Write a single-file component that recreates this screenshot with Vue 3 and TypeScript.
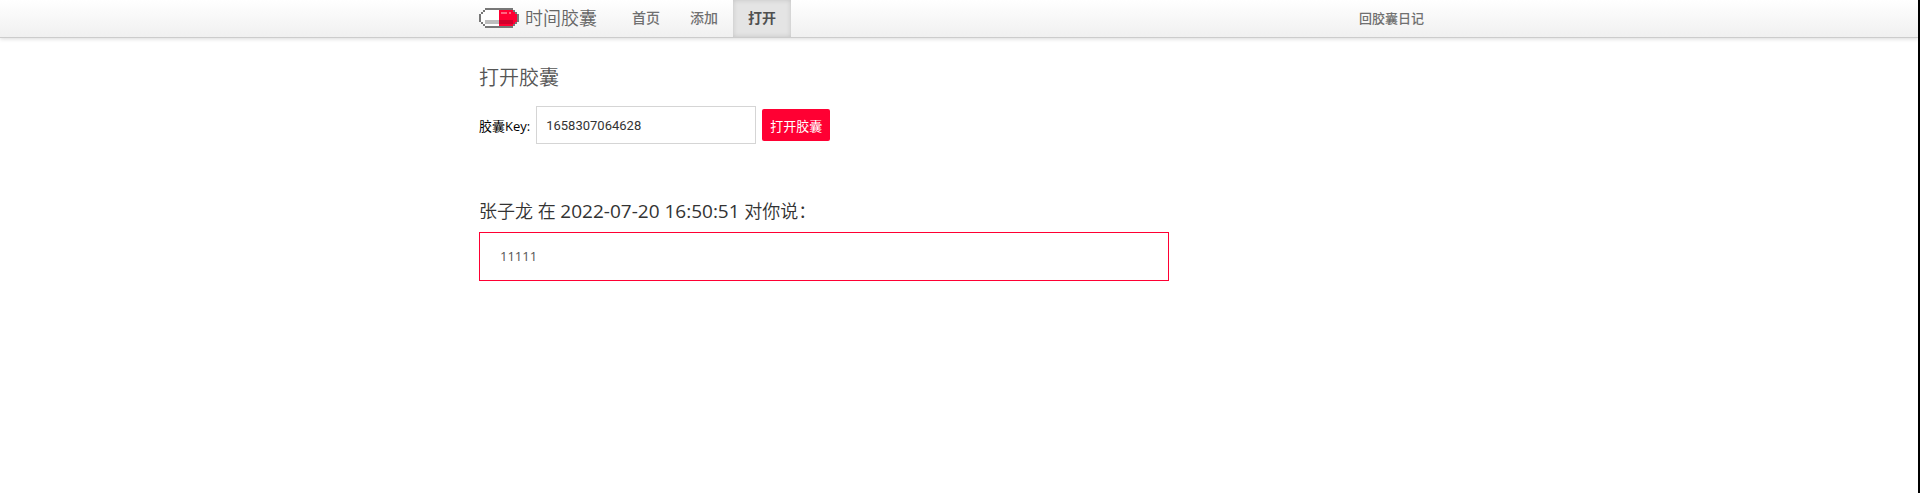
<script setup lang="ts">
import { ref } from 'vue'

interface NavItem {
  label: string
  active?: boolean
}

const navItems: NavItem[] = [
  { label: '首页' },
  { label: '添加' },
  { label: '打开', active: true },
]

const capsuleKey = ref('1658307064628')
const author = '张子龙'
const openedAt = '2022-07-20 16:50:51'
const message = '11111'
</script>

<template>
  <div class="page">
    <header class="navbar">
      <div class="container nav-inner">
        <a class="brand" href="#">
          <svg class="logo" width="40" height="20" viewBox="0 0 40 20" shape-rendering="crispEdges" aria-hidden="true">
            <path fill="#fff" d="M6 2h14v16H6v-2H4v-2H2V6h2V4h2z" />
            <path fill="#ff0033" d="M20 2h14v2h2v2h2v8h-2v2h-2v2H20z" />
            <path fill="#bdbdbd" d="M6 12h14v4H6z" />
            <path fill="#d1002c" d="M20 12h14v4H20z" />
            <path fill="#ff6680" d="M22 4h6v2h-6zM30 4h2v2h-2z" />
            <path fill="#777" d="M6 0h28v2H6zM4 2h2v2H4zM2 4h2v2H2zM0 6h2v8H0zM2 14h2v2H2zM4 16h2v2H4zM6 18h28v2H6zM34 2h2v2h-2zM36 4h2v2h-2zM38 6h2v8h-2zM36 14h2v2h-2zM34 16h2v2h-2z" />
          </svg>
          <span>时间胶囊</span>
        </a>
        <nav class="menu">
          <a v-for="item in navItems" :key="item.label" href="#" :class="{ active: item.active }">{{ item.label }}</a>
        </nav>
        <a class="back" href="#">回胶囊日记</a>
      </div>
    </header>

    <main class="container content">
      <h1>打开胶囊</h1>
      <form class="key-form" @submit.prevent>
        <label for="capsule-key">胶囊Key:</label>
        <input id="capsule-key" v-model="capsuleKey" type="text" />
        <button type="submit">打开胶囊</button>
      </form>
      <section class="result">
        <h2>{{ author }} 在 <time>{{ openedAt }}</time> 对你说：</h2>
        <p class="message">{{ message }}</p>
      </section>
    </main>
  </div>
</template>

<style>
body {
  margin: 0;
  background: #fff;
}
</style>

<style scoped>
.page {
  box-sizing: border-box;
  min-height: 100vh;
  border-right: 2px solid #000;
  font-family: "Open Sans", "Noto Sans CJK SC", sans-serif;
  font-size: 13px;
  color: #000;
}
.container {
  box-sizing: border-box;
  width: 100%;
  max-width: 960px;
  margin: 0 auto;
}
.navbar {
  background: linear-gradient(#fff, #f0f0f0);
  border-bottom: 1px solid #ccc;
  box-shadow: 0 1px 4px rgba(0, 0, 0, 0.15);
}
.nav-inner {
  display: flex;
  height: 37px;
  line-height: 36px;
}
.nav-inner a {
  color: #707070;
  text-decoration: none;
}
.nav-inner .brand {
  display: flex;
  align-items: center;
  height: 36px;
  gap: 6px;
  margin-right: 20px;
  font-size: 18px;
  font-weight: 350;
  color: #666;
}
.menu {
  display: flex;
  font-size: 14px;
  font-weight: 500;
}
.menu a {
  padding: 0 15px;
}
.nav-inner .active {
  background: #e4e4e4;
  box-shadow: inset 0 0 5px rgba(0, 0, 0, 0.15);
  color: #505050;
  font-weight: 700;
}
.back {
  margin-left: auto;
  padding: 0 15px;
  font-weight: 500;
}
h1 {
  margin: 25px 0 13px;
  font-size: 20px;
  line-height: 30px;
  font-weight: 350;
  color: #555;
}
.key-form {
  display: flex;
  align-items: center;
}
.key-form input {
  box-sizing: border-box;
  width: 220px;
  height: 38px;
  margin: 0 6px;
  padding: 0 9px;
  border: 1px solid #d5d5d5;
  background: #fff;
  font-family: Roboto, "Liberation Sans", sans-serif;
  font-size: 13px;
  color: #333;
}
.key-form button {
  height: 32px;
  padding: 0 8px;
  border: 0;
  border-radius: 2px;
  background: #ff0033;
  font: inherit;
  color: #fff;
}
h2 {
  margin: 54px 0 7px;
  font-size: 18px;
  line-height: 27px;
  font-weight: 350;
  color: #333;
}
time {
  font-size: 19px;
  font-weight: 400;
}
.message {
  max-width: 690px;
  box-sizing: border-box;
  margin: 0;
  padding: 14px 20px;
  border: 1px solid #ff0033;
  line-height: 19px;
  color: #555;
}
</style>
